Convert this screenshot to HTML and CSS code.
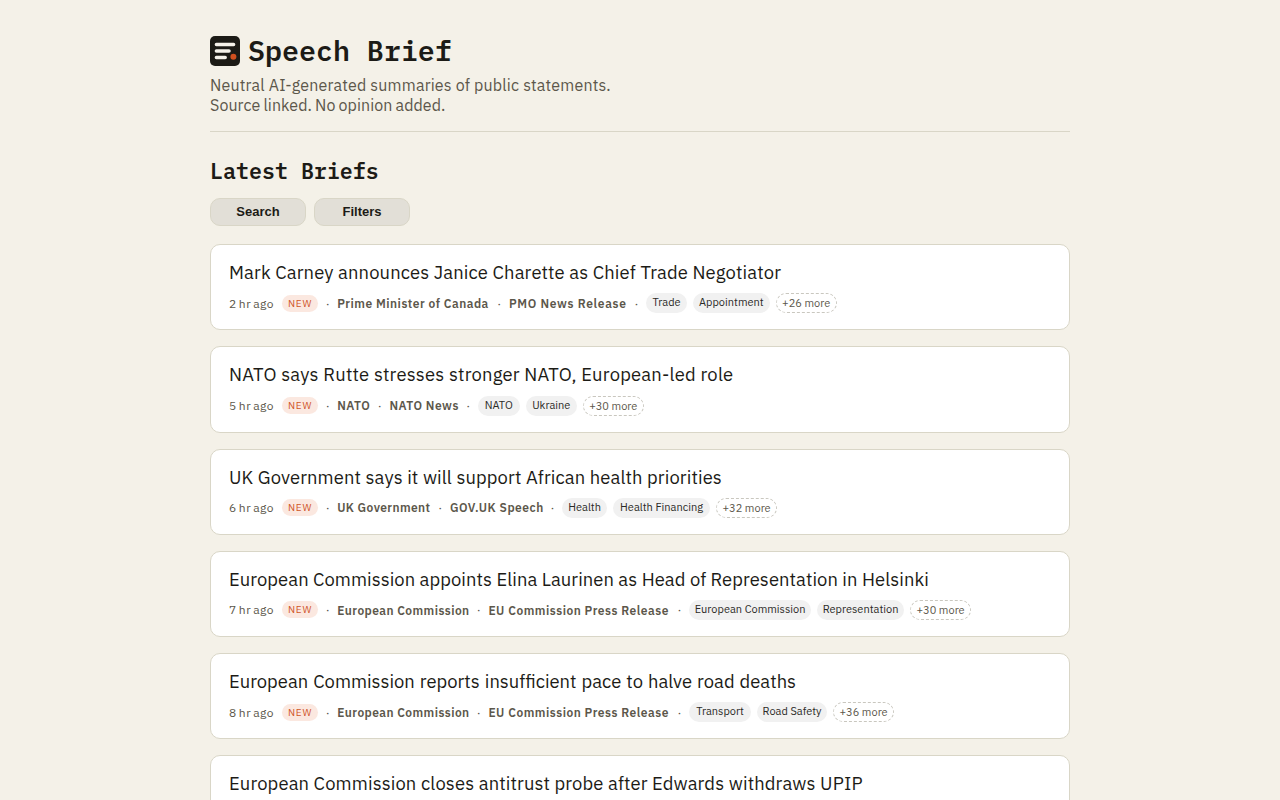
FILE: index.html
```html
<!DOCTYPE html>
<html lang="en">
<head>
<meta charset="utf-8">
<title>Speech Brief</title>
<link rel="stylesheet" href="styles.css">
</head>
<body>
<div class="page">
<header class="masthead">
<div class="brand"><svg class="logo" viewBox="0 0 30 30"><rect width="30" height="30" rx="5" fill="#1c1b16"/><path d="M6.4 8.6H23.6M6.4 15H19M6.4 21.5H15.2" stroke="#f5f2ea" stroke-width="3.5" stroke-linecap="round"/><circle cx="23.4" cy="20.8" r="3" fill="#d1501f"/></svg><h1>Speech Brief</h1></div>
<p class="tagline"><span class="lead">Neutral AI-generated summaries of public statements.</span><br><span class="note">Source linked. No opinion added.</span></p>
</header>
<main>
<h2>Latest Briefs</h2>
<div class="actions"><button>Search</button><button>Filters</button></div>
<div class="list">
<article class="card carney"><h3>Mark Carney announces Janice Charette as Chief Trade Negotiator</h3>
<div class="meta"><time>2 hr ago</time><span class="new">NEW</span><i>·</i><b class="s1">Prime Minister of Canada</b><i>·</i><b class="s2">PMO News Release</b><i>·</i><span class="chip c1">Trade</span><span class="chip c2">Appointment</span><span class="more">+26 more</span></div></article>
<article class="card nato"><h3>NATO says Rutte stresses stronger NATO, European-led role</h3>
<div class="meta"><time>5 hr ago</time><span class="new">NEW</span><i>·</i><b class="s1">NATO</b><i>·</i><b class="s2">NATO News</b><i>·</i><span class="chip c1">NATO</span><span class="chip c2">Ukraine</span><span class="more">+30 more</span></div></article>
<article class="card health"><h3>UK Government says it will support African health priorities</h3>
<div class="meta"><time>6 hr ago</time><span class="new">NEW</span><i>·</i><b class="s1">UK Government</b><i>·</i><b class="s2">GOV.UK Speech</b><i>·</i><span class="chip c1">Health</span><span class="chip c2">Health Financing</span><span class="more">+32 more</span></div></article>
<article class="card helsinki"><h3>European Commission appoints Elina Laurinen as Head of Representation in Helsinki</h3>
<div class="meta"><time>7 hr ago</time><span class="new">NEW</span><i>·</i><b class="s1">European Commission</b><i>·</i><b class="s2">EU Commission Press Release</b><i>·</i><span class="chip c1">European Commission</span><span class="chip c2">Representation</span><span class="more">+30 more</span></div></article>
<article class="card road"><h3>European Commission reports insufficient pace to halve road deaths</h3>
<div class="meta"><time>8 hr ago</time><span class="new">NEW</span><i>·</i><b class="s1">European Commission</b><i>·</i><b class="s2">EU Commission Press Release</b><i>·</i><span class="chip c1">Transport</span><span class="chip c2">Road Safety</span><span class="more">+36 more</span></div></article>
<article class="card upip"><h3>European Commission closes antitrust probe after Edwards withdraws UPIP</h3><div class="meta"></div></article>
</div>
</main>
</div>
</body>
</html>
```
FILE: styles.css
```css
* { box-sizing: border-box; }
html { overflow: hidden; }
body { margin: 0; height: 800px; overflow: hidden; background: #f4f1e8; color: #1c1b16; font-family: "IBM Plex Sans", Roboto, sans-serif; }
.page { width: 860px; height: 800px; overflow: hidden; margin: 0 auto; padding-top: 36px; }
.masthead { height: 96px; border-bottom: 1px solid #d9d6c7; }
.brand { display: flex; align-items: center; gap: 8px; height: 30px; }
.logo { width: 30px; height: 30px; }
h1, h2 { margin: 0; font-family: "IBM Plex Mono", "Liberation Mono", monospace; font-weight: 600; white-space: nowrap; }
h1 { font-size: 28.3px; line-height: 30px; }
.tagline { margin: 9px 0 0; font-size: 16px; line-height: 20px; color: #5c574b; }
.lead { letter-spacing: .18px; }
.note { letter-spacing: .08px; word-spacing: -.8px; }
h2 { margin-top: 26px; font-size: 21.65px; line-height: 26px; }
.actions { display: flex; gap: 8px; margin-top: 14px; }
button { width: 96px; height: 28px; padding: 0 0 1px; border: 1px solid #d9d6c7; border-radius: 10px; background: #e2dfd7; color: #1c1b16; font: bold 13px "Liberation Sans", sans-serif; }
.list { display: flex; flex-direction: column; gap: 16px; margin-top: 18px; }
.card { flex: none; height: 86.25px; padding: 13px 18px 0; border: 1px solid #d9d6c7; border-radius: 10px; background: #fff; }
h3 { margin: 0; font-size: 18.4px; font-weight: 400; line-height: 28px; white-space: nowrap; letter-spacing: var(--title); }
.meta { display: flex; align-items: center; height: 20px; margin-top: 7px; font-size: 12px; line-height: 20px; color: #5c574b; white-space: nowrap; }
.meta > * { flex: none; }
time { width: 53px; padding-top: 1px; letter-spacing: .5px; word-spacing: -1.2px; }
.new { width: 36px; height: 17px; border-radius: 9px; background: #fbe8e0; color: #cf5527; font-size: 10px; line-height: 17px; letter-spacing: .8px; text-align: center; }
i { width: 19.2px; padding-top: 1px; font-style: normal; text-align: center; }
b { padding-top: 1px; font-weight: 600; letter-spacing: .5px; }
.s1 { width: var(--s1); }
.s2 { width: var(--s2); }
.chip, .more { height: 20px; border-radius: 10px; text-align: center; font-size: 11px; }
.chip { margin-right: 6px; background: #f1f1f1; color: #2b2a27; line-height: 19px; }
.c1 { width: var(--c1); }
.c2 { width: var(--c2); }
.more { width: 61px; border: 1px dashed #c9c7bf; line-height: 19px; }
.carney { --title: .13px; --s1: 152.5px; --s2: 118px; --c1: 41px; --c2: 76.6px; }
.nato { --title: .21px; --s1: 33px; --s2: 69.2px; --c1: 42px; --c2: 51px; }
.nato .chip, .nato .more { margin-top: 1px; }
.health { --title: .11px; --s1: 93.5px; --s2: 93px; --c1: 45px; --c2: 97px; }
.helsinki, .road { --title: .06px; --s1: 132px; --s2: 181.5px; --c1: 122px; --c2: 87px; }
.helsinki b { padding-top: 2px; }
.helsinki .s1, .road .s1 { letter-spacing: .43px; }
.carney .s2 { letter-spacing: .68px; }
.health .s1 { letter-spacing: .4px; }
.road { --title: 0; --c1: 62px; --c2: 70px; }
.road h3 { word-spacing: .7px; }
.upip { --title: .125px; }
```
